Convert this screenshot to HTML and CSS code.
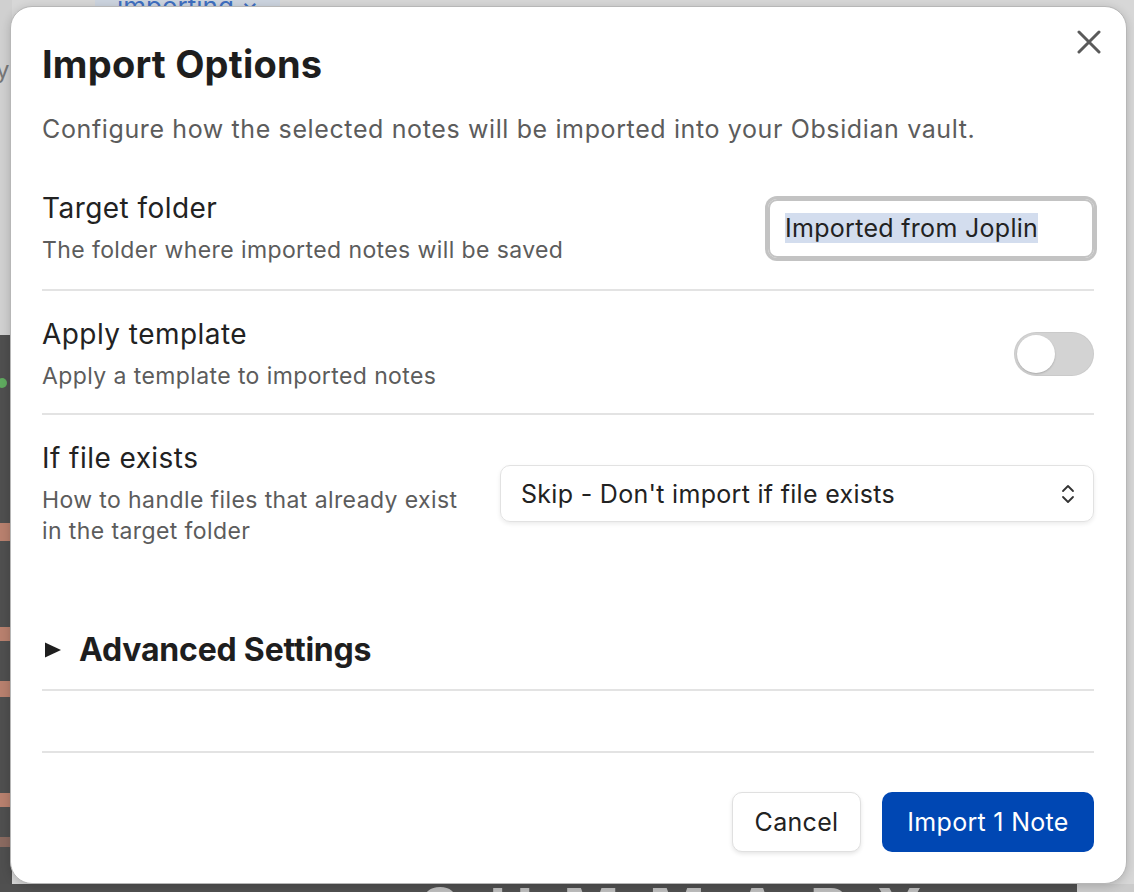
FILE: index.html
```html
<!DOCTYPE html>
<html lang="en">
<head>
<meta charset="utf-8">
<title>Import Options</title>
<link rel="stylesheet" href="styles.css">
</head>
<body>
<div class="app">
  <div class="app-top">
    <div class="app-left">
      <div class="left-light"><span class="left-char">y</span></div>
      <div class="left-dark">
        <span class="dot"></span>
        <span class="bar bar-a"></span>
        <span class="bar bar-b"></span>
        <span class="bar bar-c"></span>
        <span class="bar bar-d"></span>
        <span class="bar bar-e"></span>
      </div>
    </div>
    <div class="app-main">
      <div class="tag-row"><span class="tag">importing ×</span></div>
    </div>
  </div>
  <div class="app-bottom">
    <div class="bottom-dark"><span class="big-word">SUMMARY</span></div>
    <div class="bottom-light"></div>
  </div>
</div>

<div class="modal">
  <button class="modal-close" aria-label="Close">
    <svg width="24" height="24" viewBox="0 0 24 24"><path d="M2 2L22 22M22 2L2 22" stroke="#5a5a5a" stroke-width="3" stroke-linecap="round"/></svg>
  </button>
  <h1 class="modal-title">Import Options</h1>
  <p class="modal-desc">Configure how the selected notes will be imported into your Obsidian vault.</p>

  <div class="setting-item first">
    <div class="setting-info">
      <div class="setting-name">Target folder</div>
      <div class="setting-desc">The folder where imported notes will be saved</div>
    </div>
    <div class="setting-control">
      <div class="text-input"><span class="selected">Imported from Joplin</span></div>
    </div>
  </div>

  <div class="setting-item">
    <div class="setting-info">
      <div class="setting-name">Apply template</div>
      <div class="setting-desc">Apply a template to imported notes</div>
    </div>
    <div class="setting-control">
      <div class="toggle"><span class="knob"></span></div>
    </div>
  </div>

  <div class="setting-item">
    <div class="setting-info narrow">
      <div class="setting-name">If file exists</div>
      <div class="setting-desc">How to handle files that already exist in the target folder</div>
    </div>
    <div class="setting-control">
      <div class="dropdown">
        <span>Skip - Don't import if file exists</span>
        <svg width="16" height="22" viewBox="0 0 16 22"><path d="M3 8L8 3L13 8M3 14L8 19L13 14" fill="none" stroke="#333" stroke-width="1.8" stroke-linecap="round" stroke-linejoin="round"/></svg>
      </div>
    </div>
  </div>

  <div class="advanced">
    <svg class="caret" width="16" height="16" viewBox="0 0 16 16"><path d="M0 0.5L16 8L0 15.5Z" fill="#1e1e1e"/></svg>
    <span>Advanced Settings</span>
  </div>
  <div class="spacer"></div>

  <div class="modal-buttons">
    <button class="btn btn-cancel">Cancel</button>
    <button class="btn btn-cta">Import 1 Note</button>
  </div>
</div>
</body>
</html>
```
FILE: styles.css
```css
* { box-sizing: border-box; }
html, body { margin: 0; padding: 0; }
body {
  width: 1134px;
  height: 892px;
  overflow: hidden;
  font-family: Inter, "Liberation Sans", sans-serif;
  background: #d2d2d2;
  position: relative;
}

/* background app (dimmed) */
.app { height: 892px; display: flex; flex-direction: column; overflow: hidden; }
.app-top { height: 884px; flex: none; display: flex; }
.app-left { width: 12px; display: flex; flex-direction: column; background: #cdcdcd; }
.left-light { height: 335px; background: #d0d0d0; padding-top: 58px; overflow: hidden; }
.left-char { font-size: 24px; color: #777; line-height: 24px; display: block; margin-left: -4px; }
.left-dark { flex: 1; background: #4f4f4f; display: flex; flex-direction: column; padding-top: 43px; }
.dot { width: 10px; height: 10px; border-radius: 50%; background: #5faa5f; margin-left: -3px; }
.bar { display: block; height: 8px; background: #b8806e; }
.bar-a { margin-top: 135px; height: 18px; }
.bar-b { margin-top: 86px; height: 14px; }
.bar-c { margin-top: 40px; height: 16px; }
.bar-d { margin-top: 96px; height: 14px; }
.bar-e { margin-top: 30px; height: 10px; background: #8a6a60; }
.app-main { flex: 1; background: #d7d7d7; }
.tag-row { padding-left: 83px; height: 8px; overflow: hidden; }
.tag {
  display: inline-block;
  margin-top: -22px;
  padding: 0 22px;
  height: 30px;
  line-height: 30px;
  background: #ccd4df;
  color: #3f6fbf;
  font-size: 26px;
  border-radius: 4px;
}
.app-bottom { flex: 1; min-height: 0; display: flex; overflow: hidden; }
.bottom-dark { width: 1077px; background: #505050; overflow: hidden; padding-left: 420px; }
.big-word { display: block; font-size: 60px; font-weight: 700; color: #bdbdbd; line-height: 1; letter-spacing: 30px; margin-top: -4px; }
.bottom-light { flex: 1; background: #cbcbcb; }

/* modal */
.modal {
  position: absolute;
  left: 10px;
  top: 6px;
  width: 1117px;
  height: 878px;
  background: #ffffff;
  border: 1px solid #b7b7b7;
  border-radius: 22px;
  box-shadow: 0 2px 10px rgba(0,0,0,0.18);
  padding: 33px 32px 0 31px;
  display: flex;
  flex-direction: column;
  color: #222222;
}
.modal-close {
  position: absolute;
  top: 23px;
  right: 25px;
  width: 24px;
  height: 24px;
  padding: 0;
  border: 0;
  background: none;
  display: flex;
}
.modal-title {
  margin: 0;
  font-size: 38px;
  line-height: 49px;
  font-weight: 700;
  letter-spacing: 0.2px;
  color: #1e1e1e;
}
.modal-desc {
  margin: 23px 0 16px;
  font-size: 25px;
  line-height: 34px;
  letter-spacing: 0.62px;
  color: #5c5c5c;
}

.setting-item {
  display: flex;
  align-items: center;
  gap: 24px;
  border-top: 2px solid #e3e3e3;
  padding: 25px 0 21px;
}
.setting-item.first {
  border-top: 0;
  padding: 28px 0 23px;
}
.setting-info { flex: 1; min-width: 0; }
.setting-info.narrow { flex: 0 0 430px; }
.setting-name {
  font-size: 28px;
  line-height: 36px;
  letter-spacing: 0.45px;
  color: #222222;
}
.setting-desc {
  margin-top: 9px;
  font-size: 23px;
  line-height: 31px;
  letter-spacing: 0.4px;
  color: #5c5c5c;
}
.setting-control { display: flex; justify-content: flex-end; margin-left: auto; }

.text-input {
  width: 326px;
  height: 59px;
  border: 2px solid #c3c3c3;
  box-shadow: 0 0 0 3px #c3c3c3;
  border-radius: 9px;
  padding: 0 0 0 15px;
  display: flex;
  align-items: center;
  font-size: 25px;
  letter-spacing: 0.3px;
  color: #222;
}
.selected { background: #d3ddee; line-height: 30px; }

.toggle {
  width: 80px;
  height: 44px;
  border-radius: 22px;
  background: #d3d3d3;
  box-shadow: inset 0 0 0 1px rgba(0,0,0,0.04);
  padding: 3px;
  display: flex;
  align-items: center;
}
.knob {
  width: 38px;
  height: 38px;
  border-radius: 50%;
  background: #ffffff;
  box-shadow: 0 1px 2px rgba(0,0,0,0.2);
}

.dropdown {
  width: 594px;
  height: 57px;
  border: 1px solid #e2e2e2;
  border-radius: 10px;
  box-shadow: 0 2px 4px rgba(0,0,0,0.08);
  padding: 0 17px 0 20px;
  display: flex;
  align-items: center;
  justify-content: space-between;
  font-size: 25px;
  letter-spacing: 0.3px;
  color: #222;
}

.advanced {
  margin-top: 62px;
  padding: 0 0 19px 3px;
  display: flex;
  align-items: center;
  gap: 18px;
  font-size: 32px;
  line-height: 40px;
  font-weight: 700;
  letter-spacing: -0.2px;
  color: #1e1e1e;
  border-bottom: 2px solid #e3e3e3;
}
.caret { flex: none; }
.spacer { height: 62px; border-bottom: 2px solid #e3e3e3; }

.modal-buttons {
  display: flex;
  justify-content: flex-end;
  gap: 21px;
  padding-top: 39px;
}
.btn {
  font-family: inherit;
  font-size: 25px;
  letter-spacing: 0.3px;
  height: 60px;
  border-radius: 10px;
  padding: 0;
  display: flex;
  align-items: center;
  justify-content: center;
  cursor: pointer;
}
.btn-cancel {
  width: 129px;
  background: #ffffff;
  border: 1px solid #e0e0e0;
  color: #222;
  box-shadow: 0 2px 4px rgba(0,0,0,0.1);
}
.btn-cta {
  width: 212px;
  background: #0047b3;
  border: 0;
  color: #ffffff;
}
```
